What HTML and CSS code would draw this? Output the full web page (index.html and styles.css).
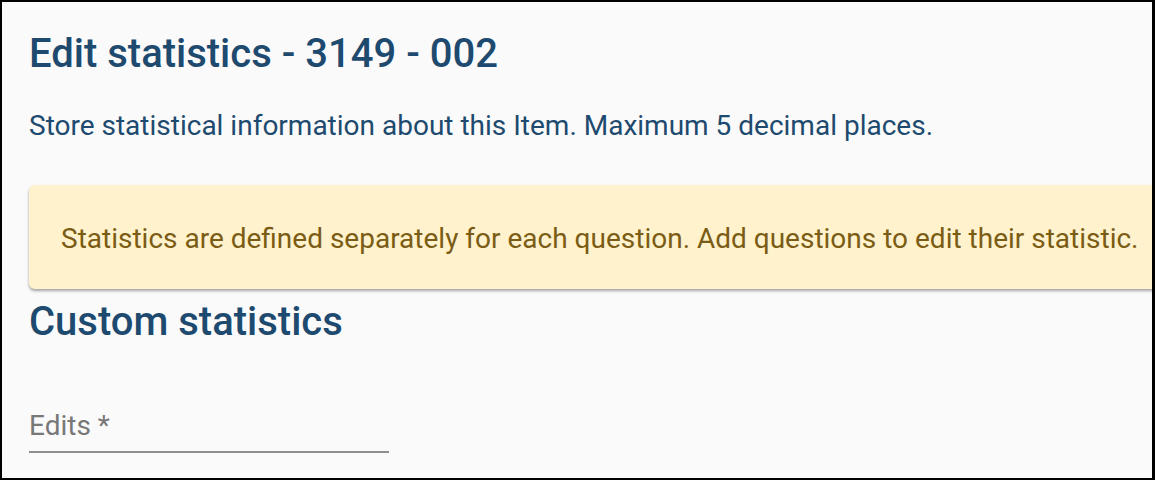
FILE: index.html
```html
<!DOCTYPE html>
<html>
<head>
<meta charset="utf-8">
<link rel="stylesheet" href="styles.css">
</head>
<body>
<div class="frame">
  <div class="content">
    <h1 class="title">Edit statistics - 3149 - 002</h1>
    <p class="lead">Store statistical information about this Item. Maximum 5 decimal places.</p>
    <div class="alert">Statistics are defined separately for each question. Add questions to edit their statistic.</div>
    <h2 class="section">Custom statistics</h2>
    <div class="field">
      <span class="label">Edits *</span>
    </div>
  </div>
</div>
</body>
</html>
```
FILE: styles.css
```css
html, body {
  margin: 0;
  padding: 0;
  background: #000;
}
.frame {
  width: 1150px;
  height: 476px;
  border-top: 2px solid #000;
  border-left: 2px solid #000;
  background: #fafafa;
  overflow: hidden;
  font-family: Roboto, "Liberation Sans", sans-serif;
}
.content {
  padding-left: 27px;
  padding-top: 28px;
  width: 1200px;
}
.title {
  margin: 0;
  font-size: 40px;
  font-weight: 500;
  line-height: 48px;
  color: #1d4a6e;
}
.lead {
  margin: 32px 0 0 0;
  font-size: 28px;
  line-height: 32px;
  color: #1d4a6e;
}
.alert {
  margin-top: 43px;
  height: 104px;
  box-sizing: border-box;
  padding: 38px 0 0 32px;
  background: #fff2cc;
  border-radius: 6px;
  box-shadow: 0 2px 3px rgba(0,0,0,0.35);
  font-size: 28px;
  line-height: 32px;
  color: #7b5c14;
}
.section {
  margin: 9px 0 0 0;
  font-size: 40px;
  font-weight: 500;
  line-height: 48px;
  color: #1d4a6e;
}
.field {
  margin-top: 64px;
  width: 360px;
  padding-bottom: 9px;
  border-bottom: 2px solid #8e8e8e;
}
.label {
  display: block;
  font-size: 28px;
  line-height: 32px;
  color: #787878;
}
```
